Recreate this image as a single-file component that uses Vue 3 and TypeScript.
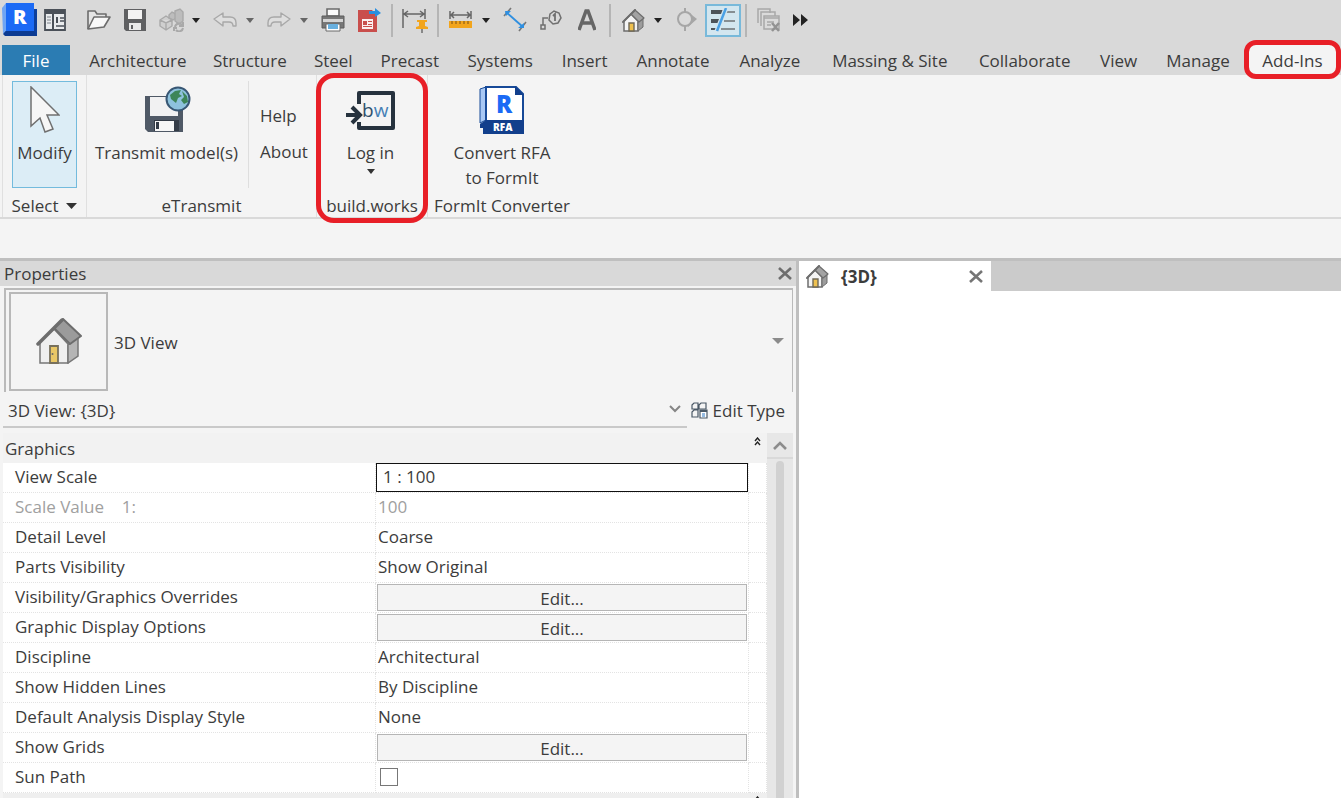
<script setup lang="ts">
import { ref } from 'vue'

interface Tool {
  kind: 'icon' | 'caret' | 'sep'
  name?: string
  label?: string
  muted?: boolean
}

interface Row {
  id: string
  label: string
  kind: 'text' | 'select' | 'button' | 'check'
  value?: string
  muted?: boolean
}

const tools: Tool[] = [
  { kind: 'icon', name: 'open', label: 'Open' },
  { kind: 'icon', name: 'save', label: 'Save' },
  { kind: 'icon', name: 'sync', label: 'Synchronize' },
  { kind: 'caret', label: 'Synchronize options' },
  { kind: 'icon', name: 'undo', label: 'Undo' },
  { kind: 'caret', label: 'Undo list', muted: true },
  { kind: 'icon', name: 'redo', label: 'Redo' },
  { kind: 'caret', label: 'Redo list', muted: true },
  { kind: 'icon', name: 'print', label: 'Print' },
  { kind: 'icon', name: 'export', label: 'Export PDF' },
  { kind: 'sep' },
  { kind: 'icon', name: 'pin', label: 'Activate dimensions' },
  { kind: 'sep' },
  { kind: 'icon', name: 'measure', label: 'Measure' },
  { kind: 'caret', label: 'Measure options' },
  { kind: 'icon', name: 'aligned', label: 'Aligned dimension' },
  { kind: 'icon', name: 'tag', label: 'Tag by category' },
  { kind: 'icon', name: 'text', label: 'Text' },
  { kind: 'sep' },
  { kind: 'icon', name: 'house', label: 'Default 3D view' },
  { kind: 'caret', label: '3D view options' },
  { kind: 'icon', name: 'section', label: 'Section' },
  { kind: 'icon', name: 'thin', label: 'Thin lines' },
  { kind: 'sep' },
  { kind: 'icon', name: 'inactive', label: 'Close inactive views' },
]

const tabs: string[] = [
  'Architecture', 'Structure', 'Steel', 'Precast', 'Systems', 'Insert', 'Annotate',
  'Analyze', 'Massing & Site', 'Collaborate', 'View', 'Manage', 'Add-Ins',
]
const activeTab = ref('Add-Ins')

const rows: Row[] = [
  { id: 'view-scale', label: 'View Scale', kind: 'select', value: '1 : 100' },
  { id: 'scale-value', label: 'Scale Value    1:', kind: 'text', value: '100', muted: true },
  { id: 'detail', label: 'Detail Level', kind: 'text', value: 'Coarse' },
  { id: 'parts', label: 'Parts Visibility', kind: 'text', value: 'Show Original' },
  { id: 'overrides', label: 'Visibility/Graphics Overrides', kind: 'button', value: 'Edit...' },
  { id: 'display', label: 'Graphic Display Options', kind: 'button', value: 'Edit...' },
  { id: 'discipline', label: 'Discipline', kind: 'text', value: 'Architectural' },
  { id: 'hidden', label: 'Show Hidden Lines', kind: 'text', value: 'By Discipline' },
  { id: 'analysis', label: 'Default Analysis Display Style', kind: 'text', value: 'None' },
  { id: 'grids', label: 'Show Grids', kind: 'button', value: 'Edit...' },
  { id: 'sun', label: 'Sun Path', kind: 'check' },
]
const sunPath = ref(false)
</script>

<template>
  <div class="app">
    <svg class="defs" aria-hidden="true">
      <symbol id="house" viewBox="0 0 46 46">
        <path d="M4 24 18 11 32 26V45H4z" fill="#efefef" stroke="#777" stroke-width="1.5" />
        <path d="M32 27 42 19V38L32 45z" fill="#b5b5b5" stroke="#777" stroke-width="1.5" />
        <path d="M18 10 27 1 45 18 34 26z" fill="#9b9b9b" stroke="#6d6d6d" stroke-width="2" stroke-linejoin="round" />
        <path d="M2 26 26 2" stroke="#6d6d6d" stroke-width="3.5" stroke-linecap="round" />
        <path d="M14 28H22V45H14z" fill="#e9c766" stroke="#77705c" stroke-width="1.8" />
        <circle cx="16.500" cy="36" r="1" fill="#666" />
      </symbol>
      <symbol id="house-small" viewBox="0 0 23 23">
        <path d="M2 12 9 5 16 12V22H2z" fill="#f4f4f4" stroke="#6d6d6d" stroke-width="1.5" />
        <path d="M16 13 21 10V18L16 22z" fill="#9c9c9c" stroke="#6d6d6d" />
        <path d="M9 5 13 1 22 9 17 13z" fill="#a3a3a3" stroke="#6d6d6d" stroke-width="1.2" stroke-linejoin="round" />
        <path d="M1 13 13 1" stroke="#6d6d6d" stroke-width="2" stroke-linecap="round" />
        <path d="M7 14H12V22H7z" fill="#efc14f" stroke="#6f6857" stroke-width="1.4" />
      </symbol>
    </svg>

    <header class="top">
      <div class="quick" role="toolbar" aria-label="Quick access">
        <button class="tool logo" aria-label="Application menu">
          <svg width="36" height="34" viewBox="0 0 36 34">
            <path d="M5 6H36V33H5L2 27z" fill="#0d3f9b" />
            <path d="M1 5 5 0V28L2 31z" fill="#6fa5f4" />
            <path d="M5 0H33V28H5z" fill="#1b6af5" />
            <path d="M2 31 5 28H33L36 33H4z" fill="#0b3a92" />
            <text x="12" y="21" fill="#fff" font-size="20" font-weight="800" font-family="Open Sans, sans-serif">R</text>
          </svg>
        </button>
        <button class="tool home" aria-label="Home">
          <svg width="22" height="22" viewBox="0 0 22 22">
            <path d="M1 1H21V21H1z" fill="#e9ebed" stroke="#4a5058" stroke-width="1.8" />
            <path d="M1 1H21V5H1z" fill="#4a5058" />
            <path d="M9 5V21" stroke="#4a5058" stroke-width="2" />
            <path d="M3 8H7M3 11H7M3 14H7" stroke="#a0a5ab" stroke-width="1.5" />
            <path d="M12 8H14V14H12z" fill="#4a5058" />
            <path d="M16 9H20M16 12H20M12 17H20" stroke="#4a5058" stroke-width="1.5" />
          </svg>
        </button>

        <template v-for="(t, i) in tools" :key="i">
          <span v-if="t.kind === 'sep'" class="sep"></span>
          <button v-else-if="t.kind === 'caret'" class="caret" :class="{ dim: t.muted }" :aria-label="t.label">
            <svg width="8" height="5" viewBox="0 0 8 5"><path d="M0 0H8L4 5z" fill="currentColor" /></svg>
          </button>
          <button v-else class="tool" :class="{ on: t.name === 'thin' }" :aria-label="t.label">
            <svg v-if="t.name === 'open'" width="24" height="20" viewBox="0 0 24 20" stroke="#6c6c6c" stroke-width="1.6" stroke-linejoin="round">
              <path d="M1 19V1H8L10 4H19V7" fill="#e4e4e4" />
              <path d="M1 19 7 7H23L17 17z" fill="#f8f8f8" />
            </svg>
            <svg v-else-if="t.name === 'save'" width="22" height="22" viewBox="0 0 22 22">
              <path d="M0 0H22V22H2L0 20z" fill="#5f6062" />
              <path d="M4 1H18V10H4z" fill="#f3f3f3" />
              <path d="M5 14H17V21H5z" fill="#e9e9e9" />
              <path d="M7 16H9V20H7z" fill="#5f6062" />
            </svg>
            <svg v-else-if="t.name === 'sync'" width="25" height="24" viewBox="0 0 25 24" fill="#cfcfcf" stroke="#a9a9a9" stroke-width="1.4">
              <path d="M1 12 7 8 13 12V18L7 22 1 18zM1 12 7 15 13 12M7 15V22" />
              <path d="M10 7 13 4 17 6V10L14 12 10 10z" fill="#bdbdbd" />
              <path d="M16 3 21 1 24 4V13L20 16 16 13z" fill="#bcbcbc" />
              <path d="M16 19A4 4 0 0 1 23 17M24 20A4 4 0 0 1 17 22M24 14V18H20M15 23V20H18" fill="none" stroke-width="2" />
            </svg>
            <svg v-else-if="t.name === 'undo' || t.name === 'redo'" :class="{ flip: t.name === 'redo' }" width="24" height="16" viewBox="0 0 24 16">
              <path d="M1 7 10 1V5H17Q23 5 23 11V14H20Q20 10 16 10H10V14z" fill="#dedede" stroke="#a8a8a8" stroke-width="1.4" stroke-linejoin="round" />
            </svg>
            <svg v-else-if="t.name === 'print'" width="24" height="24" viewBox="0 0 24 24">
              <path d="M6 1H18V8H6z" fill="#fafafa" stroke="#6b6b6b" stroke-width="1.6" />
              <path d="M1 8H23V20H1z" fill="#777" stroke="#5d5d5d" />
              <path d="M2 11H22V14H2z" fill="#d5d5d5" />
              <path d="M5 16H19V23H5z" fill="#fff" stroke="#6b6b6b" />
              <path d="M7 16H17V21H7z" fill="#69b0df" />
            </svg>
            <svg v-else-if="t.name === 'export'" width="24" height="24" viewBox="0 0 24 24">
              <path d="M1 2H15L20 8V24H1z" fill="#c94e4c" />
              <path d="M5 11H16V21H5z" fill="#fbeeee" />
              <path d="M6 13H10V17H6zM11 13H15V14H11zM11 16H15V17H11zM6 18H15V19H6z" fill="#c94e4c" />
              <path d="M12 3H18V0L24 5 18 9V6H12z" fill="#2a8fe0" />
            </svg>
            <svg v-else-if="t.name === 'pin'" width="26" height="26" viewBox="0 0 26 26">
              <path d="M1 2V21M23 2V12M2 7H22M6 4 2 7 6 10M18 4 22 7 18 10" fill="none" stroke="#666" stroke-width="1.5" />
              <path d="M15 13H25V15H23V19L26 20V22H14V20L17 19V15H15z" fill="#f2a51d" />
              <path d="M20 22V26" stroke="#888" stroke-width="2" />
            </svg>
            <svg v-else-if="t.name === 'measure'" width="24" height="18" viewBox="0 0 24 18">
              <path d="M1 0V8M22 0V8M2 4H21M5 1 2 4 5 7M18 1 21 4 18 7" fill="none" stroke="#666" stroke-width="1.5" />
              <path d="M0 10H23V17H0z" fill="#f2a51d" />
              <path d="M3 10V13M7 10V13M11 10V13M15 10V13M19 10V13" stroke="#94651a" stroke-width="1.3" />
            </svg>
            <svg v-else-if="t.name === 'aligned'" width="26" height="26" viewBox="0 0 26 26" fill="none">
              <path d="M2 9 9 1M17 24 24 15" stroke="#777" stroke-width="1.6" />
              <path d="M4 5 21 20" stroke="#2f8fe0" stroke-width="1.8" />
              <path d="M3 4H9L4 9zM22 21H16L22 16z" fill="#2f8fe0" />
            </svg>
            <svg v-else-if="t.name === 'tag'" width="22" height="20" viewBox="0 0 22 20" fill="none" stroke="#707070" stroke-width="1.5">
              <path d="M1 15H5V19H1zM3 15V8H8" />
              <path d="M10 4 14 1 19 3 21 8 18 13 13 14 9 10z" />
              <path d="M13 6 15 4V11" stroke-width="1.8" />
            </svg>
            <svg v-else-if="t.name === 'text'" width="18" height="22" viewBox="0 0 18 22">
              <path d="M1 21 8 2H10L17 21M4 14H14" fill="none" stroke="#666" stroke-width="3.5" />
            </svg>
            <svg v-else-if="t.name === 'house'" width="23" height="23"><use href="#house-small" /></svg>
            <svg v-else-if="t.name === 'section'" width="22" height="24" viewBox="0 0 22 24">
              <path d="M12 4 21 11 12 19z" fill="#a6a6a6" />
              <circle cx="9" cy="11" r="7" fill="#dadada" stroke="#a6a6a6" stroke-width="2" />
              <path d="M9 0V4M9 18V23" stroke="#a6a6a6" stroke-width="2" />
            </svg>
            <svg v-else-if="t.name === 'thin'" width="26" height="24" viewBox="0 0 26 24">
              <path d="M1 2H14V6H1zM1 11H12V15H1zM1 20H9V22H1z" fill="#4d5358" />
              <path d="M16 4H25M14 13H25M11 21H25" stroke="#6d7174" stroke-width="1.5" />
              <path d="M16 0 7 23" stroke="#d3e6ef" stroke-width="5" />
              <path d="M16 0 7 23" stroke="#4aa0e4" stroke-width="2.5" />
            </svg>
            <svg v-else width="24" height="24" viewBox="0 0 24 24" fill="#dadada" stroke="#a8a8a8" stroke-width="1.5">
              <path d="M1 15V1H13V5M4 18V4H18V8" />
              <path d="M7 8H22V21H7z" />
              <path d="M7 10H22M10 14H17M10 17H14" />
              <path d="M15 15 22 23M22 15 15 23" stroke="#929292" stroke-width="2.5" />
            </svg>
          </button>
        </template>
        <button class="more" aria-label="More tools">
          <svg width="15" height="12" viewBox="0 0 15 12"><path d="M0 0 7 6 0 12zM8 0 15 6 8 12z" fill="#222" /></svg>
        </button>
      </div>

      <nav class="ribbon-bar">
        <button class="file">File</button>
        <div class="tabs" role="tablist" aria-label="Ribbon">
          <button
            v-for="t in tabs" :key="t" class="tab" role="tab"
            :class="{ active: t === activeTab }" :aria-selected="t === activeTab" @click="activeTab = t"
          >{{ t }}</button>
        </div>
      </nav>
    </header>

    <section class="ribbon" aria-label="Add-Ins tools">
      <div class="panel select">
        <button class="big modify">
          <svg width="30" height="48" viewBox="0 0 30 48">
            <path d="M1 1V40L10 32 15 46 23 43 17 29H29z" fill="#f6f6f6" stroke="#707070" stroke-width="1.5" />
          </svg>
          <span>Modify</span>
        </button>
        <button class="caption">Select <svg width="11" height="6" viewBox="0 0 11 6"><path d="M0 0H11L5.500 6z" fill="#333" /></svg></button>
      </div>
      <div class="panel transmit">
        <div class="tools">
          <button class="big">
            <svg width="48" height="48" viewBox="0 0 48 48">
              <path d="M2 10H40V46H5L2 43z" fill="#4f5966" />
              <path d="M7 11H35V30H7z" fill="#f1f1f2" />
              <path d="M11 34H36V45H11z" fill="#343c47" />
              <path d="M12 35H31V45H12z" fill="#f6f6f6" />
              <path d="M13 36H16V43H13z" fill="#343c47" />
              <circle cx="35" cy="13" r="11.500" fill="#8ec2dd" stroke="#385774" stroke-width="2" />
              <path d="M27 9 32 5 38 4 36 8 39 10 35 12 33 17 28 13zM39 5 44 10 45 16 41 18 38 14 41 11z" fill="#3d8558" />
            </svg>
            <span>Transmit model(s)</span>
          </button>
          <div class="links">
            <button>Help</button>
            <button>About</button>
          </div>
        </div>
        <div class="caption">eTransmit</div>
      </div>
      <div class="panel works">
        <button class="big">
          <svg width="50" height="48" viewBox="0 0 50 48">
            <path d="M13 18V7H47V42H13V36" fill="none" stroke="#26323e" stroke-width="4" stroke-linejoin="round" />
            <path d="M0 29H14M6 21 14 29 6 37" fill="none" stroke="#26323e" stroke-width="4" />
            <text x="16" y="31" font-size="19" fill="#31506c" font-family="Open Sans, sans-serif">b<tspan fill="#4580b5">w</tspan></text>
          </svg>
          <span>Log in</span>
          <svg class="drop" width="8" height="5" viewBox="0 0 8 5"><path d="M0 0H8L4 5z" fill="#333" /></svg>
        </button>
        <div class="caption">build.works</div>
        <span class="mark"></span>
      </div>
      <div class="panel formit">
        <button class="big">
          <svg width="46" height="48" viewBox="0 0 46 48">
            <path d="M1 3 7 1V34L1 37z" fill="#a8c8f4" stroke="#174a98" />
            <path d="M7 1H37L44 8V36H7z" fill="#fff" stroke="#174a98" stroke-width="2" />
            <path d="M36 0 45 9H36z" fill="#123f8c" />
            <path d="M1 38 7 34H45V48H4V42H1z" fill="#123f8c" />
            <text x="17" y="27" font-size="24" font-weight="800" fill="#1b6af5" font-family="Open Sans, sans-serif">R</text>
            <text x="14" y="45" font-size="10" font-weight="800" fill="#fff" font-family="Open Sans, sans-serif">RFA</text>
          </svg>
          <span>Convert RFA<br>to FormIt</span>
        </button>
        <div class="caption">FormIt Converter</div>
      </div>
    </section>

    <main class="work">
      <aside class="props">
        <div class="title">
          <h2>Properties</h2>
          <button class="close" aria-label="Close properties">
            <svg width="14" height="13" viewBox="0 0 14 13"><path d="M1 1 13 12M13 1 1 12" stroke="#6e6e6e" stroke-width="2.6" /></svg>
          </button>
        </div>
        <button class="type" aria-haspopup="listbox">
          <span class="thumb"><svg width="46" height="46"><use href="#house" /></svg></span>
          <span class="name">3D View</span>
          <svg width="12" height="6" viewBox="0 0 12 6"><path d="M0 0H12L6 6z" fill="#8b8b8b" /></svg>
        </button>
        <div class="instance">
          <div class="pick">
            <select aria-label="Instance"><option>3D View: {3D}</option></select>
            <svg width="12" height="8" viewBox="0 0 12 8"><path d="M1 1 6 6 11 1" fill="none" stroke="#858585" stroke-width="2" /></svg>
          </div>
          <button class="edit-type">
            <svg width="17" height="17" viewBox="0 0 17 17" fill="none" stroke="#4a5866" stroke-width="1.2">
              <path d="M1 3 3 1H7V7H1zM8 3 10 1H15V7H8zM1 10 3 8H7V15H1z" />
              <path d="M9 8H16V16H9z" fill="#fff" /><path d="M9 9H16" stroke-width="2" />
              <path d="M11 12H14M11 14H14" stroke="#2d78c5" />
            </svg>
            Edit Type
          </button>
        </div>
        <div class="grid">
          <div class="list">
            <button class="group">
              Graphics
              <svg width="7" height="9" viewBox="0 0 7 9"><path d="M1 4 3.500 1 6 4M1 8 3.500 5 6 8" fill="none" stroke="#222" stroke-width="1.4" /></svg>
            </button>
            <table>
              <colgroup><col><col class="value"><col class="pad"></colgroup>
              <tbody>
                <tr v-for="r in rows" :key="r.id" :class="{ muted: r.muted }">
                  <th scope="row"><label :for="r.id">{{ r.label }}</label></th>
                  <td>
                    <select v-if="r.kind === 'select'" :id="r.id" class="scale"><option>{{ r.value }}</option></select>
                    <button v-else-if="r.kind === 'button'" :id="r.id" class="edit">{{ r.value }}</button>
                    <input v-else-if="r.kind === 'check'" :id="r.id" v-model="sunPath" type="checkbox">
                    <output v-else :id="r.id">{{ r.value }}</output>
                  </td>
                  <td></td>
                </tr>
              </tbody>
            </table>
            <div class="group next">
              <svg width="7" height="9" viewBox="0 0 7 9"><path d="M1 4 3.500 1 6 4M1 8 3.500 5 6 8" fill="none" stroke="#222" stroke-width="1.4" /></svg>
            </div>
          </div>
          <div class="scroll">
            <button aria-label="Scroll up">
              <svg width="14" height="9" viewBox="0 0 14 9"><path d="M1 8 7 2 13 8" fill="none" stroke="#8c8c8c" stroke-width="2.6" /></svg>
            </button>
            <span class="thumb-bar"></span>
          </div>
        </div>
      </aside>

      <section class="canvas" aria-label="Drawing area">
        <div class="view-tabs">
          <div class="view-tab">
            <svg width="23" height="23"><use href="#house-small" /></svg>
            <span>{3D}</span>
            <button class="close" aria-label="Close view">
              <svg width="14" height="13" viewBox="0 0 14 13"><path d="M1 1 13 12M13 1 1 12" stroke="#757575" stroke-width="2.6" /></svg>
            </button>
          </div>
        </div>
      </section>
    </main>
  </div>
</template>

<style>
body {
  margin: 0;
}
</style>

<style scoped>
.app {
  display: flex;
  flex-direction: column;
  height: 100vh;
  overflow: hidden;
  background: #f4f4f4;
  color: #3c3c3c;
  font: 17px/24px "Open Sans", "Noto Sans", sans-serif;
}
.app * {
  box-sizing: border-box;
}
.defs {
  position: absolute;
  width: 0;
  height: 0;
}
button,
select {
  margin: 0;
  padding: 0;
  border: 0;
  background: none;
  color: inherit;
  font: inherit;
}
select {
  appearance: none;
}
svg {
  display: block;
  flex: none;
}

/* Quick access toolbar */
.top {
  flex: none;
  background: #d9d9d9;
}
.quick {
  display: flex;
  align-items: center;
  height: 45px;
  padding-bottom: 5px;
}
.tool {
  display: flex;
  flex: none;
  align-items: center;
  justify-content: center;
  width: 36px;
  height: 33px;
}
.tool.logo {
  width: 37px;
}
.tool.home {
  margin-right: 8px;
}
.tool.on {
  border: 2px solid #78b9da;
  background: #d3e6ef;
}
.flip {
  transform: scaleX(-1);
}
.caret {
  display: flex;
  flex: none;
  justify-content: center;
  width: 18px;
  padding-right: 4px;
  color: #222;
}
.caret.dim {
  color: #666;
}
.sep {
  flex: none;
  width: 2px;
  height: 33px;
  margin: 0 4px;
  background: #b5b5b5;
}
.more {
  display: flex;
  justify-content: center;
  width: 26px;
}

/* Ribbon tabs */
.ribbon-bar {
  display: flex;
  height: 30px;
  padding-left: 2px;
}
.file {
  flex: none;
  width: 68px;
  margin-right: 6px;
  padding-top: 2px;
  background: #2b7cb3;
  color: #fff;
}
.tabs {
  display: grid;
  flex: 1;
  grid-template-rows: 30px;
  grid-template-columns: 124fr 100fr 67fr 86fr 95fr 74fr 103fr 91fr 149fr 121fr 67fr 92fr 97px;
}
.tab {
  padding-top: 2px;
  white-space: nowrap;
}
.tab.active {
  position: relative;
  height: 39px;
  margin-top: -5px;
  border: 5px solid #e81f27;
  border-radius: 12px;
  background: #f4f4f4;
}

/* Ribbon panels */
.ribbon {
  display: flex;
  flex: none;
  height: 144px;
  padding-left: 2px;
  border-bottom: 2px solid #d9d9d9;
}
.panel {
  display: flex;
  position: relative;
  flex: none;
  flex-direction: column;
  align-items: center;
  justify-content: space-between;
  padding-top: 6px;
  border-right: 1px solid #e0e0e0;
}
.panel.select {
  width: 85px;
  border-left: 1px solid #e0e0e0;
}
.panel.transmit {
  width: 230px;
}
.panel.works {
  width: 111px;
}
.panel.formit {
  width: 148px;
  border-right: 0;
}
.big {
  display: flex;
  flex-direction: column;
  align-items: center;
  gap: 6px;
  height: 107px;
  padding-top: 5px;
  line-height: 25px;
  white-space: nowrap;
}
.modify {
  width: 65px;
  padding-top: 4px;
  border: 1px solid #73bbdd;
  background: #dcedf6;
}
.works .big {
  margin-right: 3px;
}
.drop {
  margin-top: -2px;
}
.caption {
  display: flex;
  align-items: center;
  gap: 8px;
  height: 23px;
  white-space: nowrap;
}
.tools {
  display: flex;
  width: 100%;
}
.tools .big {
  width: 159px;
  margin-right: 2px;
}
.links {
  display: flex;
  flex: 1;
  flex-direction: column;
  align-items: flex-start;
  gap: 12px;
  padding: 23px 0 0 11px;
  border-left: 1px solid #dedede;
}
.mark {
  position: absolute;
  inset: -2px -1px -6px -1px;
  border: 5px solid #e81f27;
  border-radius: 18px;
  pointer-events: none;
}

/* Work area */
.work {
  display: flex;
  flex: 1;
  min-height: 0;
  margin-top: 39px;
  border-top: 3px solid #bfbfbf;
}
.props {
  display: flex;
  flex: none;
  flex-direction: column;
  width: 799px;
  border-right: 3px solid #bfbfbf;
}
.title {
  display: flex;
  flex: none;
  align-items: center;
  justify-content: space-between;
  height: 25px;
  padding: 0 4px;
  background: #d9d9d9;
}
h2 {
  margin: 0;
  font: inherit;
}
.type {
  display: flex;
  flex: none;
  align-items: center;
  height: 104px;
  margin: 2px 3px 0 4px;
  padding: 0 8px 0 3px;
  border: solid #bababa;
  border-width: 2px 1px 0 2px;
  text-align: left;
}
.type .thumb {
  display: grid;
  place-items: center;
  width: 99px;
  height: 99px;
  border: 2px solid #b8b8b8;
}
.type .name {
  flex: 1;
  padding: 3px 0 0 6px;
}
.instance {
  display: flex;
  flex: none;
  height: 36px;
  margin: 0 3px 5px;
}
.pick {
  display: flex;
  flex: 1;
  align-items: center;
  padding: 0 6px 0 5px;
  border-bottom: 2px solid #c9c9c9;
}
.pick select {
  flex: 1;
  padding-top: 3px;
}
.edit-type {
  display: flex;
  align-items: center;
  justify-content: flex-end;
  gap: 5px;
  width: 106px;
  padding: 1px 8px 0 0;
  white-space: nowrap;
}
.grid {
  display: flex;
  flex: 1;
  min-height: 0;
  margin: 0 3px;
  overflow: hidden;
}
.list {
  flex: 1;
}
.group {
  display: flex;
  justify-content: space-between;
  width: 100%;
  height: 30px;
  padding: 4px 6px 0 2px;
  background: #f2f2f2;
}
.group.next {
  justify-content: flex-end;
  padding-top: 3px;
  background: #efefef;
}
table {
  width: 100%;
  border-spacing: 0;
  table-layout: fixed;
  background: #fff;
}
.value {
  width: 373px;
}
.pad {
  width: 18px;
}
th,
td {
  height: 30px;
  padding: 0 0 2px;
  border: dotted #e3e3e3;
  border-width: 0 1px 1px 0;
  font-weight: 400;
  text-align: left;
  white-space: pre;
}
th {
  padding-left: 12px;
}
output {
  padding-left: 2px;
}
.muted {
  color: #a0a0a0;
}
.scale {
  display: block;
  width: 100%;
  height: 29px;
  margin-bottom: -2px;
  padding: 0 0 1px 6px;
  border: 1px solid #111;
  background: #fff;
}
.edit {
  display: block;
  width: 370px;
  height: 27px;
  margin: 1px 0 -1px 1px;
  padding-top: 2px;
  border: 1px solid #b5b5b5;
  background: #f4f4f4;
}
input {
  display: block;
  width: 18px;
  height: 18px;
  margin: 0 0 0 4px;
  appearance: none;
  border: 1px solid #777;
  background: #fff;
}
input:checked {
  background: #2b7cb3;
}
.scroll {
  display: flex;
  flex-direction: column;
  align-items: center;
  width: 26px;
  background: #e7e7e7;
}
.scroll button {
  display: grid;
  flex: none;
  place-items: center;
  width: 100%;
  height: 26px;
  border-bottom: 2px solid #d9d9d9;
}
.thumb-bar {
  flex: 1;
  width: 8px;
  margin-top: 2px;
  border-radius: 4px 4px 0 0;
  background: #d1d1d1;
}

/* Drawing area */
.canvas {
  flex: 1;
  background: #fff;
}
.view-tabs {
  height: 30px;
  background: #cbcbcb;
}
.view-tab {
  display: flex;
  align-items: center;
  gap: 12px;
  width: 192px;
  height: 30px;
  padding: 0 8px 0 7px;
  background: #fff;
  font-weight: 700;
}
.view-tab span {
  padding-top: 1px;
}
.view-tab .close {
  margin-left: auto;
}
</style>
